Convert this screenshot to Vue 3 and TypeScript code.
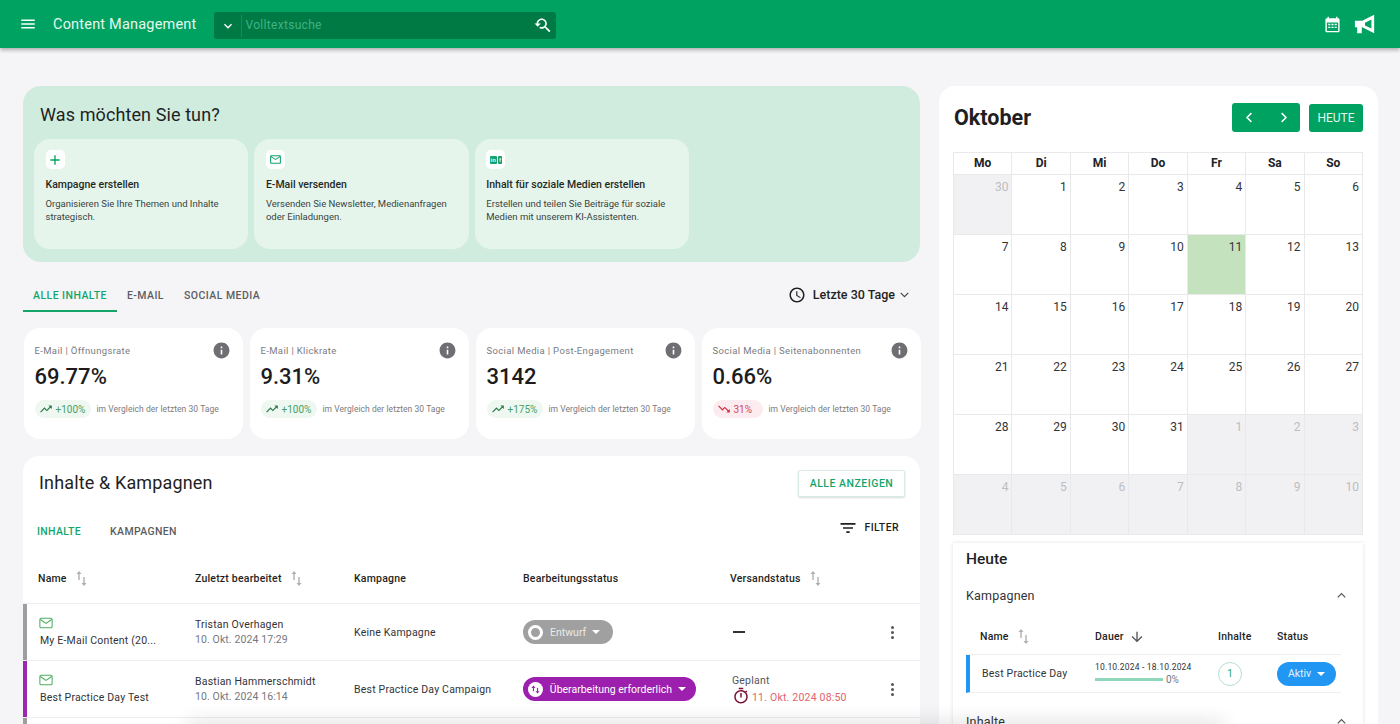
<script setup lang="ts">
type Kpi = { label: string; value: string; change: string; up: boolean }

const kpis: Kpi[] = [
  { label: 'E-Mail | Öffnungsrate', value: '69.77%', change: '+100%', up: true },
  { label: 'E-Mail | Klickrate', value: '9.31%', change: '+100%', up: true },
  { label: 'Social Media | Post-Engagement', value: '3142', change: '+175%', up: true },
  { label: 'Social Media | Seitenabonnenten', value: '0.66%', change: '31%', up: false },
]

const actions = [
  { icon: 'plus', title: 'Kampagne erstellen', text: 'Organisieren Sie Ihre Themen und Inhalte strategisch.' },
  { icon: 'mail', title: 'E-Mail versenden', text: 'Versenden Sie Newsletter, Medienanfragen oder Einladungen.' },
  { icon: 'social', title: 'Inhalt für soziale Medien erstellen', text: 'Erstellen und teilen Sie Beiträge für soziale Medien mit unserem KI-Assistenten.' },
]

const weekdays = ['Mo', 'Di', 'Mi', 'Do', 'Fr', 'Sa', 'So']

const days: { n: number; muted: boolean; today: boolean }[] = []
days.push({ n: 30, muted: true, today: false })
for (let i = 1; i <= 31; i++) days.push({ n: i, muted: false, today: i === 11 })
for (let i = 1; i <= 10; i++) days.push({ n: i, muted: true, today: false })
</script>

<template>
  <div class="page">
    <header class="topbar">
      <svg class="menu-icon" viewBox="0 0 24 24"><path d="M3 18h18v-2H3v2zm0-5h18v-2H3v2zm0-7v2h18V6H3z" /></svg>
      <span class="app-title">Content Management</span>
      <div class="search">
        <svg class="search-chevron" viewBox="0 0 24 24"><path d="M16.59 8.59 12 13.17 7.41 8.59 6 10l6 6 6-6z" /></svg>
        <span class="search-text">Volltextsuche</span>
        <svg class="search-icon" viewBox="0 0 24 24"><path d="M17.01 14h-.8l-.27-.27c.98-1.14 1.57-2.61 1.57-4.23 0-3.59-2.91-6.5-6.5-6.5s-6.5 3-6.5 6.5H2l3.84 4 4.16-4H6.51C6.51 7 8.53 5 11.01 5s4.5 2.01 4.5 4.5c0 2.48-2.02 4.5-4.5 4.5-.65 0-1.26-.14-1.82-.38L7.71 15.1c.97.57 2.09.9 3.3.9 1.61 0 3.08-.59 4.22-1.57l.27.27v.79l5.01 5 1.49-1.49-4.99-5z" /></svg>
      </div>
      <div class="top-actions">
        <svg class="cal-icon" viewBox="0 0 24 24">
          <path d="M20 3h-1V1h-2v2H7V1H5v2H4c-1.1 0-2 .9-2 2v16c0 1.1.9 2 2 2h16c1.1 0 2-.9 2-2V5c0-1.1-.9-2-2-2zm0 18H4V9h16v12z" />
          <path d="M6 11h3v2H6zm4.5 0h3v2h-3zm4.5 0h3v2h-3zM6 15h3v2H6zm4.5 0h3v2h-3zm4.5 0h3v2h-3z" />
        </svg>
        <svg class="horn-icon" viewBox="0 0 24 24"><path fill-rule="evenodd" d="M1 8.5h8L22 2v20L9 15.5H8.5V22h-5v-6.500H1zM12 10.5v3l7 3.500V7z" /></svg>
      </div>
    </header>

    <main class="content">
      <div class="left">
        <section class="hero">
          <h2 class="hero-title">Was möchten Sie tun?</h2>
          <div class="actions">
            <article v-for="a in actions" :key="a.title" class="action">
              <div class="action-icon">
                <svg v-if="a.icon === 'plus'" class="ic-plus" viewBox="0 0 24 24"><path d="M19 13h-6v6h-2v-6H5v-2h6V5h2v6h6v2z" /></svg>
                <svg v-else-if="a.icon === 'mail'" class="ic-mail" viewBox="0 0 24 24"><path d="M20 4H4c-1.1 0-2 .9-2 2v12c0 1.1.9 2 2 2h16c1.1 0 2-.9 2-2V6c0-1.1-.9-2-2-2zm0 14H4V8l8 5 8-5v10zm-8-7L4 6h16l-8 5z" /></svg>
                <span v-else class="ic-social"><i>in</i><i>f</i></span>
              </div>
              <h3 class="action-title">{{ a.title }}</h3>
              <p class="action-text">{{ a.text }}</p>
            </article>
          </div>
        </section>

        <div class="range-row">
          <nav class="tabs">
            <span class="tab active">ALLE INHALTE</span>
            <span class="tab">E-MAIL</span>
            <span class="tab">SOCIAL MEDIA</span>
          </nav>
          <div class="range">
            <svg class="clock" viewBox="0 0 24 24"><path d="M11.99 2C6.47 2 2 6.48 2 12s4.47 10 9.99 10C17.52 22 22 17.52 22 12S17.52 2 11.99 2zM12 20c-4.42 0-8-3.58-8-8s3.58-8 8-8 8 3.58 8 8-3.58 8-8 8zm.5-13H11v6l5.25 3.15.75-1.23-4.5-2.67V7z" /></svg>
            <span>Letzte 30 Tage</span>
            <svg class="range-chevron" viewBox="0 0 24 24"><path d="M5 9l7 7 7-7" /></svg>
          </div>
        </div>

        <section class="kpis">
          <article v-for="k in kpis" :key="k.label" class="kpi">
            <div class="kpi-head">
              <span class="kpi-label">{{ k.label }}</span>
              <svg class="info" viewBox="0 0 24 24"><path d="M12 2C6.48 2 2 6.48 2 12s4.48 10 10 10 10-4.48 10-10S17.52 2 12 2zm1 15h-2v-6h2v6zm0-8h-2V7h2v2z" /></svg>
            </div>
            <div class="kpi-value">{{ k.value }}</div>
            <div class="kpi-foot">
              <span class="chip" :class="{ down: !k.up }">
                <svg v-if="k.up" viewBox="0 0 24 24"><path d="M16 6l2.29 2.29-4.88 4.88-4-4L2 16.59 3.41 18l6-6 4 4 6.3-6.29L22 12V6z" /></svg>
                <svg v-else viewBox="0 0 24 24"><path d="M16 18l2.29-2.29-4.88-4.88-4 4L2 7.41 3.41 6l6 6 4-4 6.3 6.29L22 12v6z" /></svg>
                {{ k.change }}
              </span>
              <span class="kpi-note">im Vergleich der letzten 30 Tage</span>
            </div>
          </article>
        </section>

        <section class="table-card">
          <div class="table-head">
            <h2 class="table-title">Inhalte &amp; Kampagnen</h2>
            <button class="all-btn">ALLE ANZEIGEN</button>
          </div>
          <div class="sub-row">
            <span class="sub-tab active">INHALTE</span>
            <span class="sub-tab">KAMPAGNEN</span>
            <div class="filter">
              <svg viewBox="0 0 24 24"><path d="M10 18h4v-2h-4v2zM3 6v2h18V6H3zm3 7h12v-2H6v2z" /></svg>
              <span>FILTER</span>
            </div>
          </div>

          <div class="grid-row grid-header">
            <div class="th">Name <svg class="sort" viewBox="0 0 11 15"><path d="M3 0 .5 3h1.800v6h1.400V3h1.800zM8 15l2.500-3H8.700V6H7.300v6H5.500z" /></svg></div>
            <div class="th">Zuletzt bearbeitet <svg class="sort" viewBox="0 0 11 15"><path d="M3 0 .5 3h1.800v6h1.400V3h1.800zM8 15l2.500-3H8.700V6H7.300v6H5.500z" /></svg></div>
            <div class="th">Kampagne</div>
            <div class="th">Bearbeitungsstatus</div>
            <div class="th">Versandstatus <svg class="sort" viewBox="0 0 11 15"><path d="M3 0 .5 3h1.800v6h1.400V3h1.800zM8 15l2.500-3H8.700V6H7.300v6H5.500z" /></svg></div>
            <div></div>
          </div>

          <div class="grid-row row grey-bar">
            <div class="name-cell">
              <svg class="row-mail" viewBox="0 0 16 13"><rect x="1" y="1" width="14" height="11" rx="1.5" /><path d="M1.5 2.500 8 7l6.500-4.500" /></svg>
              <span>My E-Mail Content (20...</span>
            </div>
            <div class="who"><span>Tristan Overhagen</span><small>10. Okt. 2024 17:29</small></div>
            <div class="plain">Keine Kampagne</div>
            <div>
              <span class="status grey">
                <span class="status-dot ring"></span>
                Entwurf
                <i class="caret"></i>
              </span>
            </div>
            <div class="dash"></div>
            <div class="kebab"><i></i><i></i><i></i></div>
          </div>

          <div class="grid-row row purple-bar">
            <div class="name-cell">
              <svg class="row-mail" viewBox="0 0 16 13"><rect x="1" y="1" width="14" height="11" rx="1.5" /><path d="M1.5 2.500 8 7l6.500-4.500" /></svg>
              <span>Best Practice Day Test</span>
            </div>
            <div class="who"><span>Bastian Hammerschmidt</span><small>10. Okt. 2024 16:14</small></div>
            <div class="plain">Best Practice Day Campaign</div>
            <div>
              <span class="status purple">
                <span class="status-dot arrows"><svg viewBox="0 0 16 16"><path d="M5.5 3 3 6h1.800v4h1.400V6H8zM10.500 13 13 10h-1.800V6H9.800v4H8z" /></svg></span>
                Überarbeitung erforderlich
                <i class="caret"></i>
              </span>
            </div>
            <div class="sched">
              <span>Geplant</span>
              <div class="sched-date">
                <svg viewBox="0 0 24 24"><path d="M15 1H9v2h6V1zm-2 13v-6h-2v6h2zm6.030-6.610 1.420-1.420c-.43-.51-.9-.99-1.410-1.410l-1.420 1.420C16.070 4.740 14.120 4 12 4c-4.970 0-9 4.030-9 9s4.020 9 9 9 9-4.030 9-9c0-2.120-.74-4.070-1.970-5.610zM12 20c-3.870 0-7-3.130-7-7s3.130-7 7-7 7 3.130 7 7-3.130 7-7 7z" /></svg>
                <span>11. Okt. 2024 08:50</span>
              </div>
            </div>
            <div class="kebab"><i></i><i></i><i></i></div>
          </div>
          <div class="row-stub"></div>
        </section>
      </div>

      <aside class="side">
        <div class="cal-head">
          <h2 class="month">Oktober</h2>
          <div class="pager">
            <svg viewBox="0 0 24 24"><path d="M15 5l-7 7 7 7" /></svg>
            <svg viewBox="0 0 24 24"><path d="M9 5l7 7-7 7" /></svg>
          </div>
          <button class="today-btn">HEUTE</button>
        </div>

        <div class="calendar">
          <div v-for="w in weekdays" :key="w" class="wd">{{ w }}</div>
          <div v-for="(d, i) in days" :key="i" class="day" :class="{ muted: d.muted, today: d.today }">{{ d.n }}</div>
        </div>

        <section class="today-card">
          <h3 class="today-title">Heute</h3>
          <div class="acc-head">
            <span>Kampagnen</span>
            <svg viewBox="0 0 24 24"><path d="M6 15l6-6 6 6" /></svg>
          </div>
          <div class="mini-grid mini-header">
            <div class="mini-th name-th">Name <svg class="sort" viewBox="0 0 11 15"><path d="M3 0 .5 3h1.800v6h1.400V3h1.800zM8 15l2.500-3H8.700V6H7.300v6H5.500z" /></svg></div>
            <div class="mini-th">Dauer <svg class="down-arrow" viewBox="0 0 24 24"><path d="M20 12l-1.410-1.410L13 16.170V4h-2v12.170l-5.580-5.590L4 12l8 8 8-8z" /></svg></div>
            <div class="mini-th">Inhalte</div>
            <div class="mini-th">Status</div>
          </div>
          <div class="mini-grid mini-row">
            <div class="mini-name">Best Practice Day</div>
            <div class="duration">
              <span class="dates">10.10.2024 - 18.10.2024</span>
              <div class="progress"><i></i><span>0%</span></div>
            </div>
            <div><span class="count">1</span></div>
            <div><span class="aktiv">Aktiv <i class="caret"></i></span></div>
          </div>
          <div class="acc-head second">
            <span>Inhalte</span>
            <svg viewBox="0 0 24 24"><path d="M6 15l6-6 6 6" /></svg>
          </div>
        </section>
      </aside>
    </main>

    <div class="bottom-fade"></div>
  </div>
</template>

<style>
html,
body {
  margin: 0;
  background: #f5f5f8;
}
</style>

<style scoped>
* {
  box-sizing: border-box;
}

.page {
  position: relative;
  height: 724px;
  overflow: hidden;
  background: #f5f5f8;
  font-family: Roboto, "Liberation Sans", sans-serif;
  color: #1f1f23;
}

h2,
h3,
p {
  margin: 0;
  font-weight: 400;
}

/* top bar */
.topbar {
  position: relative;
  z-index: 2;
  display: flex;
  align-items: center;
  height: 48px;
  padding: 0 19px;
  background: #00a261;
  box-shadow: 0 2px 4px rgba(0, 0, 0, 0.3);
  color: #fff;
}

.menu-icon {
  width: 18px;
  height: 18px;
  fill: #fff;
}

.app-title {
  margin-left: 16px;
  font-size: 14.5px;
  letter-spacing: 0.2px;
  color: #e4f7ee;
}

.search {
  display: flex;
  align-items: center;
  width: 342px;
  height: 27px;
  margin-top: 3px;
  margin-left: 17px;
  padding-left: 6px;
  padding-right: 4px;
  background: #007a45;
  border-radius: 3px;
}

.search-chevron {
  width: 16px;
  height: 16px;
  fill: #fff;
}

.search-text {
  flex: 1;
  height: 22px;
  margin-left: 5px;
  padding-left: 4px;
  border-left: 1px solid #1a8a5a;
  font-size: 12px;
  line-height: 20px;
  letter-spacing: 0.3px;
  color: #3fb283;
}

.search-icon {
  width: 19px;
  height: 19px;
  fill: #fff;
}

.top-actions {
  display: flex;
  align-items: center;
  gap: 13px;
  margin-left: auto;
  padding-right: 5px;
}

.cal-icon {
  width: 17px;
  height: 17px;
  fill: #fff;
}

.horn-icon {
  width: 22px;
  height: 22px;
  fill: #fff;
}

/* columns */
.content {
  display: grid;
  grid-template-columns: 897px 439px;
  column-gap: 19px;
  padding: 38px 0 0 23px;
}

.left {
  min-width: 0;
}

/* hero */
.hero {
  height: 176px;
  padding: 17px 11px 0;
  background: #cfecdf;
  border-radius: 18px;
}

.hero-title {
  margin-left: 6px;
  font-size: 18px;
  line-height: 23px;
  letter-spacing: 0.1px;
}

.actions {
  display: flex;
  gap: 6px;
  margin-top: 13px;
}

.action {
  width: 214.4px;
  height: 110px;
  padding: 11px 11px 0 11.5px;
  background: #e6f5ec;
  border-radius: 16px;
}

.action-icon {
  display: flex;
  align-items: center;
  justify-content: center;
  width: 19px;
  height: 19px;
  background: #fff;
  border-radius: 5px;
}

.ic-plus {
  width: 16px;
  height: 16px;
  fill: #00a261;
}

.ic-mail {
  width: 13px;
  height: 13px;
  fill: #13a36c;
}

.ic-social {
  display: flex;
  gap: 1px;
}

.ic-social i {
  display: block;
  height: 8px;
  padding: 0 1px;
  background: #13a36c;
  border-radius: 1px;
  font-family: "Liberation Sans", sans-serif;
  font-size: 6px;
  font-style: normal;
  font-weight: 700;
  line-height: 8px;
  color: #e6f5ec;
}

.action-title {
  margin-top: 9px;
  font-size: 10.5px;
  font-weight: 500;
  line-height: 13px;
  color: #1f2a25;
}

.action-text {
  margin-top: 6px;
  font-size: 9.5px;
  line-height: 13px;
  color: #39443f;
}

/* range row */
.range-row {
  display: flex;
  justify-content: space-between;
  height: 50px;
}

.tabs {
  display: flex;
  padding-top: 8px;
}

.tab {
  display: flex;
  align-items: center;
  height: 42px;
  padding: 10px 10px 0;
  border-bottom: 2px solid transparent;
  font-size: 10.5px;
  font-weight: 500;
  letter-spacing: 0.45px;
  color: #5d5d61;
}

.tab.active {
  color: #14a56b;
  border-bottom-color: #14a56b;
}

.range {
  display: flex;
  align-items: center;
  gap: 7px;
  height: 50px;
  padding-top: 15px;
  padding-right: 9px;
  font-size: 12.5px;
  font-weight: 500;
  color: #1f1f23;
}

.clock {
  width: 18px;
  height: 18px;
  fill: #1f1f23;
}

.range-chevron {
  width: 13px;
  height: 13px;
  margin-left: -4px;
  fill: none;
  stroke: #45454a;
  stroke-width: 2.2;
}

/* kpi cards */
.kpis {
  display: grid;
  grid-template-columns: repeat(4, 219px);
  gap: 7px;
  margin-top: 16px;
  padding-left: 0.5px;
}

.kpi {
  height: 111px;
  padding: 12px 11px 0;
  background: #fff;
  border-radius: 16px;
}

.kpi-head {
  display: flex;
  align-items: center;
  justify-content: space-between;
  height: 20px;
  color: #7b7b80;
}

.kpi-label {
  font-size: 9.5px;
  letter-spacing: 0.35px;
}

.info {
  width: 19px;
  height: 19px;
  margin-right: 1px;
  fill: #6f6f73;
}

.kpi-value {
  margin-top: 3px;
  font-size: 22px;
  font-weight: 500;
  line-height: 28px;
  color: #1c1c20;
}

.kpi-foot {
  display: flex;
  align-items: center;
  gap: 6px;
  margin-top: 9px;
}

.chip {
  display: inline-flex;
  align-items: center;
  gap: 3px;
  min-width: 56px;
  height: 18px;
  padding: 0 3px 0 4px;
  background: #eef8f0;
  border-radius: 9px;
  font-size: 10px;
  color: #43a168;
}

.chip svg {
  width: 14px;
  height: 14px;
  fill: #2c7a4b;
}

.chip.down {
  min-width: 50px;
  background: #fdecef;
  color: #d0485f;
}

.chip.down svg {
  fill: #cf2f3f;
}

.kpi-note {
  font-size: 8.5px;
  letter-spacing: 0.05px;
  color: #7b7b80;
}

/* table */
.table-card {
  height: 300px;
  margin-top: 17px;
  background: #fff;
  border-radius: 16px 16px 0 0;
}

.table-head {
  display: flex;
  align-items: center;
  justify-content: space-between;
  height: 54px;
  padding: 0 15px 0 16px;
}

.table-title {
  margin-top: -2px;
  font-size: 18px;
  letter-spacing: 0.15px;
  color: #1f1f23;
}

.all-btn {
  width: 107px;
  height: 27px;
  padding: 0;
  background: #fff;
  border: 1px solid #d9ece4;
  border-radius: 2px;
  box-shadow: 0 1px 2px rgba(0, 0, 0, 0.15);
  font-family: inherit;
  font-size: 10.5px;
  font-weight: 500;
  letter-spacing: 0.5px;
  color: #14a56b;
}

.sub-row {
  display: flex;
  align-items: center;
  gap: 29px;
  height: 41px;
  padding: 2px 21px 0 14px;
}

.sub-tab {
  font-size: 10.5px;
  font-weight: 500;
  letter-spacing: 0.35px;
  color: #5d5d61;
}

.sub-tab.active {
  color: #14a56b;
}

.filter {
  display: flex;
  align-items: center;
  gap: 7px;
  margin-left: auto;
  margin-top: -8px;
  font-size: 10.5px;
  font-weight: 500;
  letter-spacing: 0.4px;
}

.filter svg {
  width: 20px;
  height: 20px;
  fill: #1f1f23;
}

.grid-row {
  display: grid;
  grid-template-columns: 157px 159px 169px 207px 150px 1fr;
  align-items: center;
  padding-left: 15px;
}

.grid-header {
  height: 53px;
  padding-top: 2px;
  border-bottom: 1px solid #eeeef1;
}

.th {
  display: flex;
  align-items: center;
  font-size: 10.5px;
  font-weight: 500;
  letter-spacing: 0.2px;
  color: #1f1f23;
}

.sort {
  width: 11px;
  height: 15px;
  margin-left: 9px;
  fill: #b0b0b4;
}

.row {
  position: relative;
  height: 57px;
  border-bottom: 1px solid #eeeef1;
  font-size: 10.5px;
  letter-spacing: 0.2px;
}

.grey-bar::before,
.purple-bar::before {
  content: "";
  position: absolute;
  left: 0;
  top: 0;
  bottom: 0;
  width: 4px;
}

.grey-bar::before {
  background: #9e9e9e;
}

.purple-bar::before {
  background: #9c27b0;
}

.name-cell {
  display: flex;
  flex-direction: column;
  align-items: flex-start;
  gap: 5px;
  padding-left: 2px;
  line-height: 13px;
  color: #333337;
}

.row-mail {
  width: 14px;
  height: 12px;
  margin-left: -1px;
  fill: none;
  stroke: #4caf60;
  stroke-width: 1.2;
}

.who {
  display: flex;
  flex-direction: column;
  gap: 2px;
  color: #333337;
}

.who small {
  font-size: 10.5px;
  letter-spacing: 0.1px;
  color: #77777c;
}

.plain {
  color: #333337;
}

.status {
  display: inline-flex;
  align-items: center;
  height: 24px;
  padding: 0 10px 0 5px;
  border-radius: 12px;
  font-size: 10.5px;
  letter-spacing: 0;
  white-space: nowrap;
  color: #fff;
}

.status.grey {
  width: 90px;
  background: #a0a0a0;
  color: #eaeaea;
}

.status.purple {
  width: 173px;
  background: #9c1fad;
}

.status-dot {
  display: inline-flex;
  align-items: center;
  justify-content: center;
  width: 15px;
  height: 15px;
  margin-right: 7px;
  border-radius: 50%;
  background: #fff;
}

.status-dot.ring {
  background: transparent;
  border: 3px solid #fff;
}

.status-dot.arrows svg {
  width: 13px;
  height: 13px;
  fill: #9c1fad;
}

.caret {
  display: inline-block;
  width: 0;
  height: 0;
  margin-left: 6px;
  border-left: 4px solid transparent;
  border-right: 4px solid transparent;
  border-top: 4px solid #fff;
}

.dash {
  width: 12px;
  height: 2px;
  margin-left: 3px;
  background: #333337;
}

.sched {
  display: flex;
  flex-direction: column;
  gap: 4px;
  margin-top: -1px;
  margin-left: 2px;
  color: #55555a;
}

.sched-date {
  display: flex;
  align-items: center;
  gap: 2px;
  height: 13px;
  color: #e4626a;
}

.sched-date svg {
  width: 18px;
  height: 18px;
  fill: #7c1234;
  margin-top: -3px;
}

.kebab {
  display: flex;
  flex-direction: column;
  align-items: center;
  gap: 2px;
  width: 6px;
  margin-left: 9px;
}

.kebab i {
  width: 3px;
  height: 3px;
  border-radius: 50%;
  background: #55555a;
}

.row-stub {
  height: 12px;
  width: 4px;
  background: #9e9e9e;
}

/* right column */
.side {
  height: 660px;
  padding: 0 15px 0 14px;
  background: #fff;
  border-radius: 16px 16px 0 0;
}

.cal-head {
  display: flex;
  align-items: center;
  height: 66px;
  padding-bottom: 3px;
}

.month {
  flex: 1;
  margin-left: 1px;
  font-size: 21.5px;
  font-weight: 700;
  color: #1f1f23;
}

.pager {
  display: flex;
  align-items: center;
  justify-content: space-around;
  width: 68px;
  height: 29px;
  background: #00a261;
  border-radius: 3px;
}

.pager svg {
  width: 15px;
  height: 15px;
  fill: none;
  stroke: #fff;
  stroke-width: 2.4;
}

.today-btn {
  width: 54px;
  height: 28px;
  margin-left: 9px;
  padding: 0;
  background: #00a261;
  border: none;
  border-radius: 3px;
  font-family: inherit;
  font-size: 12px;
  color: #e4f7ee;
}

.calendar {
  display: grid;
  grid-template-columns: repeat(7, 1fr);
  grid-template-rows: 22px repeat(6, 60px);
  border-top: 1px solid #e9e9ec;
  border-left: 1px solid #e9e9ec;
}

.wd,
.day {
  border-right: 1px solid #e9e9ec;
  border-bottom: 1px solid #e9e9ec;
}

.wd {
  text-align: center;
  font-size: 12px;
  font-weight: 700;
  line-height: 21px;
  color: #222226;
}

.day {
  padding: 5px 3px 0 0;
  text-align: right;
  font-size: 12px;
  line-height: 14px;
  color: #333337;
}

.day.muted {
  background: #f1f1f3;
  color: #bdbdc0;
}

.day.today {
  background: #c4e2bd;
}

/* today panel */
.today-card {
  height: 200px;
  margin-top: 8px;
  padding: 6px 12px 0 13px;
  background: #fff;
  box-shadow: 0 0 4px rgba(0, 0, 0, 0.12);
}

.today-title {
  font-size: 15.5px;
  font-weight: 500;
  line-height: 20px;
}

.acc-head {
  display: flex;
  align-items: center;
  justify-content: space-between;
  height: 24px;
  margin-top: 14px;
  padding-right: 2px;
  font-size: 12.5px;
  letter-spacing: 0.2px;
  color: #333337;
}

.acc-head svg {
  width: 15px;
  height: 15px;
  fill: none;
  stroke: #55555a;
  stroke-width: 2;
}

.acc-head.second {
  margin-top: 16px;
}

.mini-grid {
  display: grid;
  grid-template-columns: 129px 123px 59px 1fr;
  align-items: center;
}

.mini-header {
  height: 36px;
  margin-top: 12px;
  margin-right: 10px;
  border-bottom: 1px solid #eeeef1;
}

.mini-th {
  display: flex;
  align-items: center;
  font-size: 10.5px;
  font-weight: 500;
  letter-spacing: 0.2px;
}

.name-th {
  padding-left: 14px;
}

.down-arrow {
  width: 16px;
  height: 16px;
  margin-left: 5px;
  fill: #55555a;
}

.mini-row {
  height: 38px;
  margin-right: 10px;
  border-left: 4px solid #2196f3;
  border-bottom: 1px solid #eeeef1;
  grid-template-columns: 125px 123px 59px 1fr;
}

.mini-name {
  padding-left: 12px;
  font-size: 10.5px;
  letter-spacing: 0.2px;
  color: #333337;
}

.duration {
  display: flex;
  flex-direction: column;
  gap: 2px;
}

.dates {
  font-size: 8.5px;
  letter-spacing: 0.2px;
  color: #333337;
}

.progress {
  display: flex;
  align-items: center;
  gap: 3px;
  font-size: 10px;
  color: #77777c;
}

.progress i {
  width: 68px;
  height: 3px;
  background: #8fd6bb;
}

.count {
  display: flex;
  align-items: center;
  justify-content: center;
  width: 24px;
  height: 24px;
  border: 1px solid #b7ded0;
  border-radius: 50%;
  font-size: 10px;
  color: #14a56b;
}

.aktiv {
  display: inline-flex;
  align-items: center;
  justify-content: center;
  width: 59px;
  height: 24px;
  background: #2196f3;
  border-radius: 12px;
  font-size: 10.5px;
  color: #e3f2fd;
}

/* soft shadow rising from below the fold */
.bottom-fade {
  position: absolute;
  left: 190px;
  right: 180px;
  bottom: -10px;
  height: 10px;
  box-shadow: 0 0 18px 4px rgba(0, 0, 0, 0.1);
  pointer-events: none;
}
</style>
